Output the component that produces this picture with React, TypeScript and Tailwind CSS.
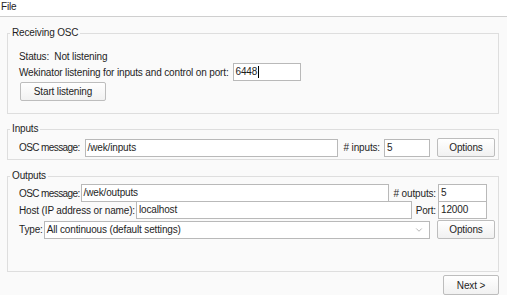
import { ChevronDown } from "lucide-react";

const field =
  "h-[18px] border border-[#b9b9b9] bg-white px-[2px] leading-[16px] text-[#1e1e1e]";
const button =
  "h-[19px] rounded-[2px] border border-[#bdbdbd] bg-gradient-to-b from-white to-[#f1f1f1] leading-[17px] text-[#1e1e1e]";

function Panel({ title, className, children }: { title: string; className?: string; children: React.ReactNode }) {
  return (
    <fieldset className={`mx-[7px] mr-[8px] border border-[#dedede] ${className ?? ""}`}>
      <legend className="ml-[2px] px-[2px] leading-[14px]">{title}</legend>
      {children}
    </fieldset>
  );
}

export default function App() {
  return (
    <div className="w-[507px] h-[295px] overflow-hidden bg-[#fafafa] text-[10px] tracking-[-0.15px] text-[#1e1e1e] font-['Liberation_Sans',Arial,sans-serif]">
      <div className="h-[17px] border-b border-[#cfcfcf] bg-white pl-[1px] leading-[14px]">File</div>

      <Panel title="Receiving OSC" className="mt-[9px]">
        <div className="pl-[11px] pt-[10px] pb-[12px]">
          <div className="h-[13px] leading-[13px] whitespace-pre">Status:  Not listening</div>
          <div className="flex items-center h-[18px]">
            <span>Wekinator listening for inputs and control on port:</span>
            <div className={`${field} ml-[4px] w-[68px] border-[#8f8f8f] flex items-center`}>
              6448<span className="ml-[1px] inline-block h-[12px] w-px bg-black" />
            </div>
          </div>
          <button className={`${button} mt-[1px] ml-[1px] w-[86px]`}>Start listening</button>
        </div>
      </Panel>

      <Panel title="Inputs" className="mt-[8px]">
        <div className="flex items-center pl-[11px] pr-[3px] pt-[2px] pb-[2px]">
          <span className="tracking-[-0.6px]">OSC message:</span>
          <div className={`${field} ml-[5px] flex-1`}>/wek/inputs</div>
          <span className="ml-[6px]"># inputs:</span>
          <div className={`${field} ml-[4px] w-[46px]`}>5</div>
          <button className={`${button} ml-[7px] w-[58px]`}>Options</button>
        </div>
      </Panel>

      <Panel title="Outputs" className="mt-[9px]">
        <div className="pl-[11px] pr-[3px] pt-[1px] pb-[32px]">
          <div className="flex items-center h-[18px] pr-[8px]">
            <span className="tracking-[-0.6px]">OSC message:</span>
            <div className={`${field} ml-[1px] flex-1`}>/wek/outputs</div>
            <span className="ml-[5px]"># outputs:</span>
            <div className={`${field} ml-[2px] w-[49px]`}>5</div>
          </div>
          <div className="flex items-center h-[18px] -mt-px pr-[8px]">
            <span>Host (IP address or name):</span>
            <div className={`${field} ml-[1px] flex-1`}>localhost</div>
            <span className="ml-[4px]">Port:</span>
            <div className={`${field} ml-[2px] w-[49px]`}>12000</div>
          </div>
          <div className="flex items-center h-[19px] mt-px">
            <span>Type:</span>
            <div className={`${field} ml-[1px] flex-1 flex items-center justify-between`}>
              <span>All continuous (default settings)</span>
              <ChevronDown size={10} strokeWidth={1.5} className="mr-[3px] text-[#8a8a8a]" />
            </div>
            <button className={`${button} ml-[7px] w-[58px]`}>Options</button>
          </div>
        </div>
      </Panel>

      <div className="flex justify-end pr-[8px] mt-[3px]">
        <button className={`${button} w-[56px] h-[20px]`}>Next &gt;</button>
      </div>
    </div>
  );
}
